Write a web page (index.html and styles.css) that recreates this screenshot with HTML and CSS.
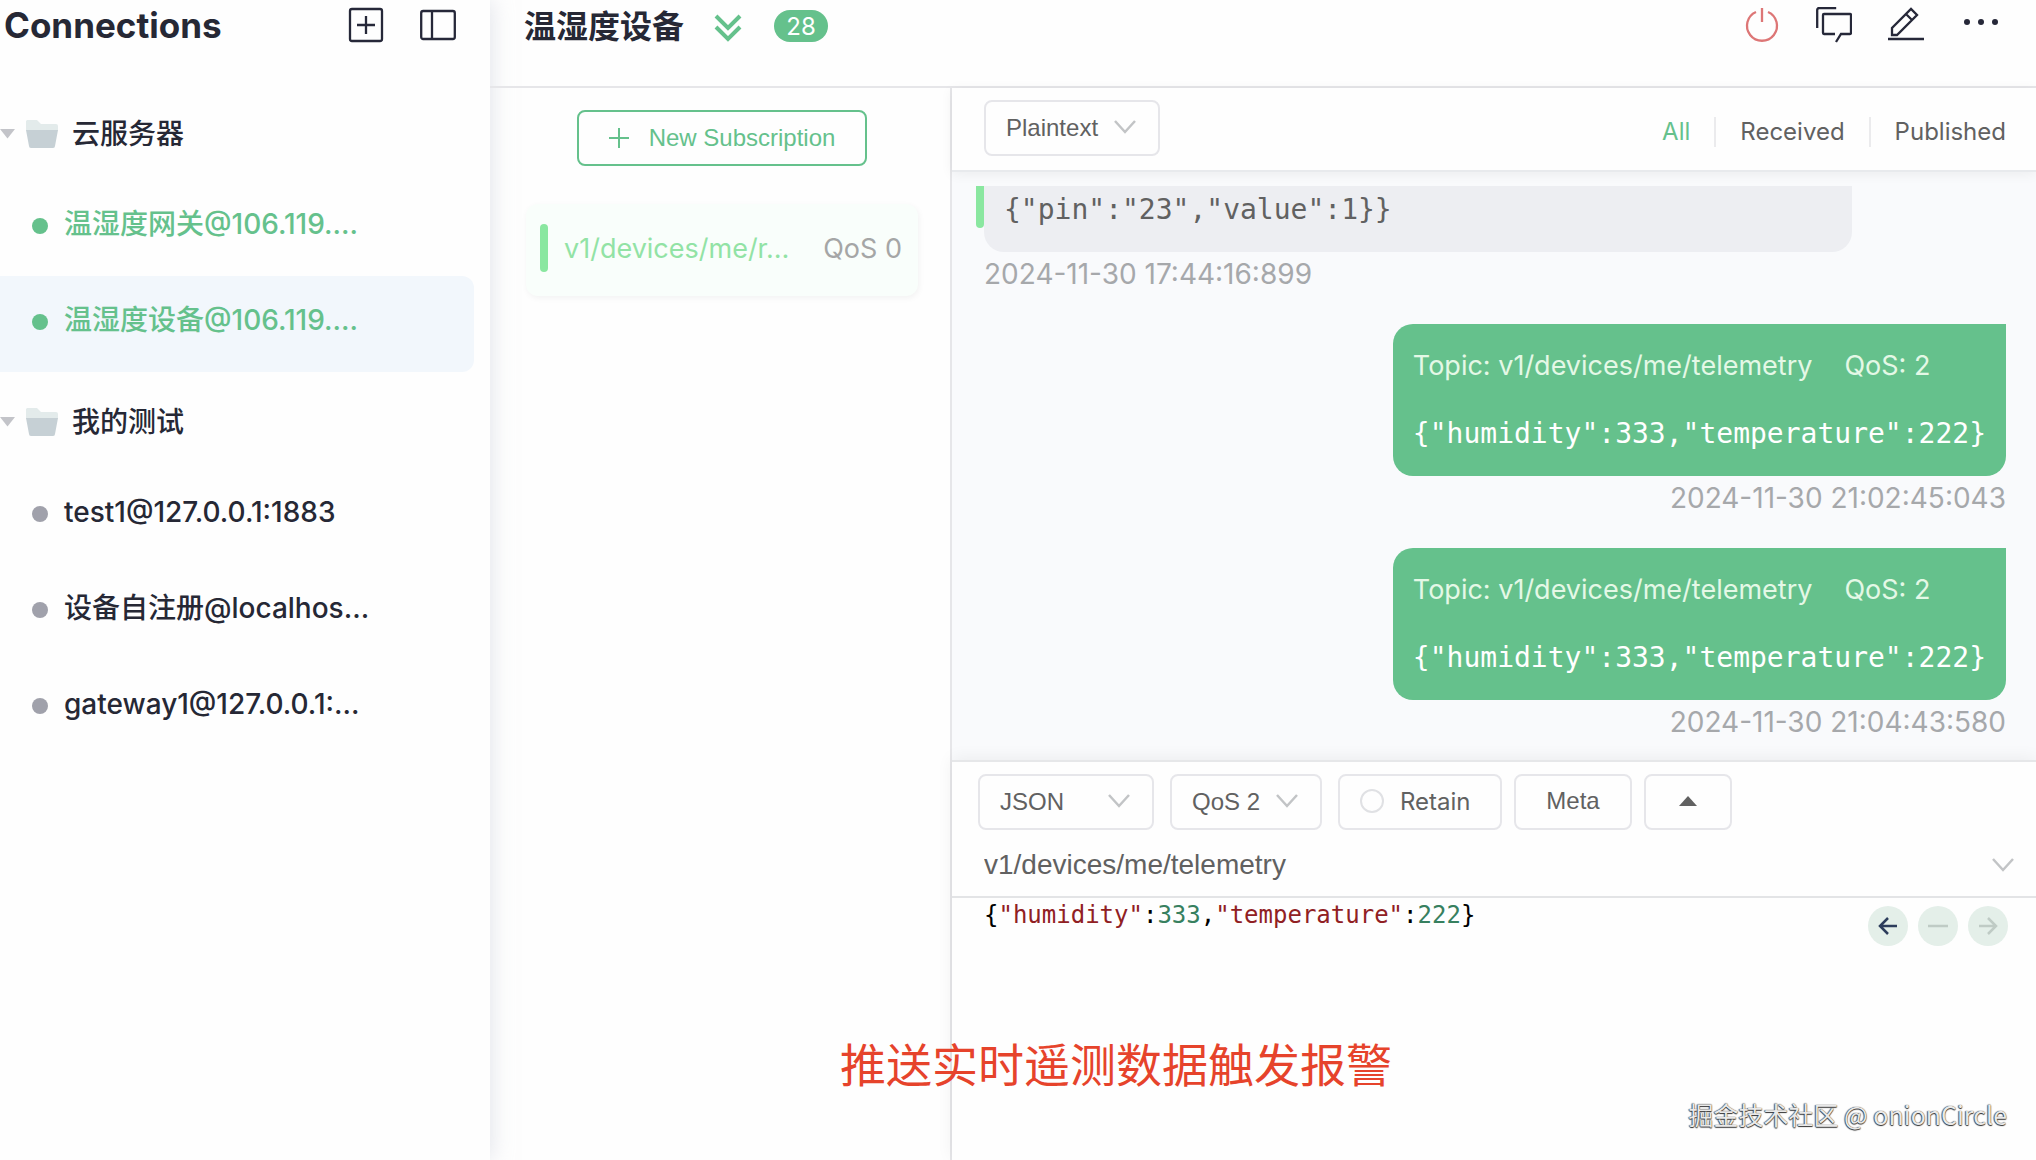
FILE: index.html
```html
<!DOCTYPE html>
<html lang="zh-CN">
<head>
<meta charset="utf-8">
<title>Connections</title>
<link rel="stylesheet" href="styles.css">
</head>
<body>
<div class="app">
  <aside class="sidebar">
    <header class="sidebar-head">
      <h1 class="sidebar-title">Connections</h1>
      <div class="sidebar-tools">
        <button class="icon-btn" type="button" aria-label="New connection">
          <svg width="36" height="36" viewBox="0 0 36 36" fill="none" stroke="currentColor" stroke-width="2.3"><rect x="2" y="2" width="32" height="32" rx="2"/><path d="M18 9v18M9 18h18"/></svg>
        </button>
        <button class="icon-btn" type="button" aria-label="Toggle panel">
          <svg width="36" height="36" viewBox="0 0 36 36" fill="none" stroke="currentColor" stroke-width="2.3"><rect x="1.200" y="4" width="33.600" height="28" rx="2"/><path d="M12 4v28"/></svg>
        </button>
      </div>
    </header>
    <nav class="tree">
      <div class="group">
        <svg class="caret" width="16" height="10" viewBox="0 0 16 10"><path d="M0 0h15L7.500 9.500z" fill="#c3c4c9"/></svg>
        <svg class="folder" width="32" height="28" viewBox="0 0 32 28"><path d="M1 0h10l4 4h15a2 2 0 0 1 2 2v5H0V1z" fill="#e3ebeb"/><path d="M0 10h32l-3 16a2 2 0 0 1-2 2H5a2 2 0 0 1-2-2z" fill="#c6d0d5"/></svg>
        <span>云服务器</span>
      </div>
      <a class="item online" href="#"><i class="dot"></i>温湿度网关@106.119.…</a>
      <a class="item online active" href="#"><i class="dot"></i>温湿度设备@106.119.…</a>
      <div class="group">
        <svg class="caret" width="16" height="10" viewBox="0 0 16 10"><path d="M0 0h15L7.500 9.500z" fill="#c3c4c9"/></svg>
        <svg class="folder" width="32" height="28" viewBox="0 0 32 28"><path d="M1 0h10l4 4h15a2 2 0 0 1 2 2v5H0V1z" fill="#e3ebeb"/><path d="M0 10h32l-3 16a2 2 0 0 1-2 2H5a2 2 0 0 1-2-2z" fill="#c6d0d5"/></svg>
        <span>我的测试</span>
      </div>
      <a class="item" href="#"><i class="dot"></i>test1@127.0.0.1:1883</a>
      <a class="item" href="#"><i class="dot"></i>设备自注册@localhos…</a>
      <a class="item" href="#"><i class="dot"></i>gateway1@127.0.0.1:…</a>
    </nav>
  </aside>

  <main class="main">
    <header class="main-head">
      <h2 class="conn-title">温湿度设备</h2>
      <button class="icon-btn expand" type="button" aria-label="Show details">
        <svg width="28" height="28" viewBox="0 0 28 28" fill="none" stroke="currentColor" stroke-width="4"><path d="M2 2l12 12L26 2M2 13l12 12 12-12"/></svg>
      </button>
      <span class="badge">28</span>
      <div class="head-tools">
        <button class="icon-btn power" type="button" aria-label="Disconnect">
          <svg width="36" height="36" viewBox="0 0 36 36" fill="none" stroke="currentColor" stroke-width="2.300"><path d="M12 5a15 15 0 1 0 12 0M18 1v14"/></svg>
        </button>
        <button class="icon-btn" type="button" aria-label="Chat">
          <svg width="36" height="36" viewBox="0 0 36 36" fill="none" stroke="currentColor" stroke-width="2.300"><path d="M1.200 21V3a2 2 0 0 1 2-2h17M19 27H8a1 1 0 0 1-1-1V8a1 1 0 0 1 1-1h26a1 1 0 0 1 1 1v18a1 1 0 0 1-1 1h-9l-5 8"/></svg>
        </button>
        <button class="icon-btn" type="button" aria-label="Edit">
          <svg width="36" height="36" viewBox="0 0 36 36" fill="none" stroke="currentColor" stroke-width="2.300"><path d="M0 32h36M4 28v-7L23 2l6 6-20 20zM18 7l6 6" /></svg>
        </button>
        <button class="icon-btn" type="button" aria-label="More">
          <svg width="42" height="36" viewBox="0 0 42 36" fill="currentColor"><circle cx="7" cy="15" r="3"/><circle cx="21" cy="15" r="3"/><circle cx="35" cy="15" r="3"/></svg>
        </button>
      </div>
    </header>

    <div class="workspace">
      <section class="subs">
        <button class="new-sub" type="button">
          <svg width="20" height="20" viewBox="0 0 20 20" fill="none" stroke="currentColor" stroke-width="2"><path d="M10 0v20M0 10h20"/></svg>
          New Subscription
        </button>
        <div class="sub-card">
          <i class="sub-mark"></i>
          <span class="sub-topic">v1/devices/me/r…</span>
          <span class="sub-qos">QoS 0</span>
        </div>
      </section>

      <section class="chat">
        <div class="chat-bar">
          <span class="select w-format">
            <select aria-label="Received format"><option>Plaintext</option></select>
            <svg class="chev" width="22" height="14" viewBox="0 0 22 14"><path d="M1 1l10 11L21 1"/></svg>
          </span>
          <nav class="filters">
            <a class="on" href="#">All</a>
            <a href="#">Received</a>
            <a href="#">Published</a>
          </nav>
        </div>

        <div class="messages">
          <div class="msg received">
            <div class="bubble"><code>{"pin":"23","value":1}}</code></div>
            <time>2024-11-30 17:44:16:899</time>
          </div>
          <div class="msg sent">
            <div class="bubble">
              <p class="meta"><span>Topic: v1/devices/me/telemetry</span><span>QoS: 2</span></p>
              <code>{"humidity":333,"temperature":222}</code>
            </div>
            <time>2024-11-30 21:02:45:043</time>
          </div>
          <div class="msg sent">
            <div class="bubble">
              <p class="meta"><span>Topic: v1/devices/me/telemetry</span><span>QoS: 2</span></p>
              <code>{"humidity":333,"temperature":222}</code>
            </div>
            <time>2024-11-30 21:04:43:580</time>
          </div>
        </div>

        <div class="publish">
          <div class="options">
            <span class="select w-format">
              <select aria-label="Payload format"><option>JSON</option></select>
              <svg class="chev" width="22" height="14" viewBox="0 0 22 14"><path d="M1 1l10 11L21 1"/></svg>
            </span>
            <span class="select w-qos">
              <select aria-label="QoS"><option>QoS 2</option></select>
              <svg class="chev" width="22" height="14" viewBox="0 0 22 14"><path d="M1 1l10 11L21 1"/></svg>
            </span>
            <div class="options-end">
              <label class="box retain"><input type="radio" name="retain">Retain</label>
              <button class="box meta-btn" type="button">Meta</button>
              <button class="box collapse" type="button" aria-label="Collapse"><svg width="18" height="10" viewBox="0 0 18 10"><path d="M9 0l9 10H0z" fill="currentColor"/></svg></button>
            </div>
          </div>
          <div class="topic-row">
            <input class="topic" type="text" aria-label="Topic" value="v1/devices/me/telemetry">
            <svg class="chev" width="22" height="14" viewBox="0 0 22 14"><path d="M1 1l10 11L21 1"/></svg>
          </div>
          <div class="editor">
            <pre class="payload"><code>{<b class="key">"humidity"</b>:<b class="num">333</b>,<b class="key">"temperature"</b>:<b class="num">222</b>}</code></pre>
            <div class="history">
              <button type="button" aria-label="Previous"><svg width="20" height="18" viewBox="0 0 20 18"><path d="M10 1L2 9l8 8M2 9h17"/></svg></button>
              <button type="button" aria-label="Reset" disabled><svg width="20" height="18" viewBox="0 0 20 18"><path d="M0 9h20"/></svg></button>
              <button type="button" aria-label="Next" disabled><svg width="20" height="18" viewBox="0 0 20 18"><path d="M10 1l8 8-8 8M18 9H1"/></svg></button>
            </div>
          </div>
        </div>
      </section>
    </div>
  </main>
  <p class="caption">推送实时遥测数据触发报警</p>
  <p class="watermark">掘金技术社区 @ onionCircle</p>
</div>
</body>
</html>
```
FILE: styles.css
```css
* { box-sizing: border-box; }

body {
  margin: 0;
  font-family: Inter, "Noto Sans CJK SC", sans-serif;
  font-size: 28px;
  color: #616161;
  background: #fefefe;
}

h1, h2, p, pre { margin: 0; }
a { color: inherit; text-decoration: none; }
code, pre { font-family: "DejaVu Sans Mono", monospace; }
svg { display: block; flex: none; }

button, input, select {
  font-family: "Liberation Sans", sans-serif;
  font-size: 24px;
  color: #616161;
  background: none;
  border: 0;
  margin: 0;
  padding: 0;
}

.app {
  position: relative;
  display: flex;
  height: 100vh;
  overflow: hidden;
}

/* Connection list */
.sidebar {
  flex: none;
  width: 490px;
  color: #262835;
  box-shadow: 2px 0 20px #c9cdd980;
}

.sidebar-head {
  display: flex;
  justify-content: space-between;
  height: 84px;
  padding: 0 34px 0 4px;
}

.sidebar-title {
  font-size: 35px;
  line-height: 50px;
  font-weight: 700;
}

.sidebar-tools {
  display: flex;
  align-items: flex-start;
  gap: 36px;
  padding-top: 7px;
}

.icon-btn { color: #262839; display: block; }

.group, .item {
  display: flex;
  align-items: center;
  height: 96px;
  line-height: 36px;
  font-weight: 500;
  white-space: nowrap;
}

.group { padding-top: 4px; }
.caret { margin-right: 10px; }
.folder { margin-right: 14px; }

.item {
  margin-right: 16px;
  padding: 0 0 8px 32px;
  border-radius: 0 12px 12px 0;
}

.item.online { color: #65c18c; }
.item.active { background: #f2f7fc; }

.dot {
  width: 16px;
  height: 16px;
  margin-top: 4px;
  margin-right: 16px;
  border-radius: 50%;
  background: #a0a1ab;
}

.online .dot { background: #65c18c; }

/* Right side */
.main {
  flex: 1;
  min-width: 0;
  display: flex;
  flex-direction: column;
}

.main-head {
  display: flex;
  align-items: flex-start;
  height: 88px;
  padding: 0 34px;
  border-bottom: 2px solid #e6e6e9;
}

.conn-title {
  font-size: 32px;
  line-height: 54px;
  font-weight: 700;
  color: #262835;
}

.expand { margin: 14px 32px 0 30px; color: #65c18c; }

.badge {
  min-width: 54px;
  height: 32px;
  margin-top: 10px;
  border-radius: 16px;
  background: #65c18c;
  color: #fff;
  font-size: 24px;
  line-height: 34px;
  text-align: center;
}

.head-tools {
  display: flex;
  gap: 36px;
  margin-left: auto;
  padding-top: 7px;
}

.power { color: #dd7676; }

.workspace { flex: 1; min-height: 0; display: flex; }

/* Subscriptions */
.subs {
  flex: none;
  width: 462px;
  padding: 22px 32px 0 36px;
  border-right: 2px solid #e6e6e9;
}

.new-sub {
  display: flex;
  align-items: center;
  justify-content: center;
  gap: 20px;
  width: 290px;
  height: 56px;
  margin: 0 auto;
  border: 2px solid #65c18c;
  border-radius: 8px;
  color: #65c18c;
}

.sub-card {
  display: flex;
  align-items: center;
  height: 92px;
  margin-top: 38px;
  padding: 0 16px 4px 14px;
  border-radius: 12px;
  background: #f9fefb;
  box-shadow: 1px 2px 6px #0000000d;
}

.sub-mark {
  width: 8px;
  height: 48px;
  margin-right: 16px;
  border-radius: 4px;
  background: #8ae7a0;
}

.sub-topic { font-size: 27px; color: #92e3a5; }
.sub-qos { margin-left: auto; font-size: 27px; color: #a5a6a6; }

/* Message stream */
.chat {
  flex: 1;
  min-width: 0;
  display: flex;
  flex-direction: column;
}

.chat-bar {
  position: relative;
  display: flex;
  justify-content: space-between;
  height: 84px;
  padding: 12px 30px 0 32px;
  border-bottom: 2px solid #e8eaed;
  box-shadow: 0 2px 12px #0000000f;
}

.select { position: relative; height: 56px; }
.w-format { width: 176px; }
.w-qos { width: 152px; }

.select select {
  appearance: none;
  width: 100%;
  height: 56px;
  padding: 0 40px 2px 20px;
  border: 2px solid #e6e6ea;
  border-radius: 8px;
}

.select .chev {
  position: absolute;
  top: 20px;
  right: 24px;
  pointer-events: none;
}

.chev path { fill: none; stroke: #c2c4c6; stroke-width: 2.500; }

.filters {
  display: flex;
  align-items: center;
  height: 38px;
  font-size: 24px;
}

.filters a { line-height: 30px; margin-top: 26px; }
.filters a + a { margin-left: 24px; padding-left: 24px; border-left: 2px solid #ebebed; }
.filters .on { color: #65c18c; }

.messages {
  flex: none;
  display: flex;
  flex-direction: column;
  gap: 32px;
  padding: 14px 30px 20px 24px;
  background: #f9fafc;
}

.msg { display: flex; flex-direction: column; align-items: flex-start; gap: 4px; }
.sent { align-items: flex-end; }
.msg time { line-height: 36px; color: #a6a8ab; }
.received time { margin-left: 8px; }
.bubble code { display: block; line-height: 36px; }

.received .bubble {
  position: relative;
  width: 868px;
  max-width: 100%;
  height: 66px;
  margin-left: 8px;
  padding: 6px 20px;
  border-radius: 0 0 20px 20px;
  background: #edeef2;
}

/* Topic colour strip on the left of the bubble */
.received .bubble::before {
  content: "";
  position: absolute;
  left: -8px;
  top: 0;
  width: 8px;
  height: 42px;
  border-radius: 0 0 4px 4px;
  background: #8ae7a0;
}

.sent .bubble {
  height: 152px;
  padding: 24px 20px;
  border-radius: 20px 0 20px 20px;
  background: #65c18c;
  color: #fff;
}

.meta {
  display: flex;
  gap: 32px;
  font-size: 27px;
  line-height: 36px;
  margin-bottom: 32px;
  color: #e4f8e6;
}

/* Publish panel */
.publish {
  position: relative;
  flex: 1;
  background: #fefefe;
  border-top: 2px solid #e6e7e9;
  box-shadow: 0 -2px 16px #0000000f;
}

.options { display: flex; gap: 16px; padding: 12px 26px 0; }
.options-end { display: flex; gap: 12px; }

.box {
  display: flex;
  align-items: center;
  justify-content: center;
  height: 56px;
  padding-bottom: 2px;
  border: 2px solid #e6e6ea;
  border-radius: 8px;
}

.retain {
  width: 164px;
  justify-content: flex-start;
  padding-left: 20px;
  gap: 16px;
  font-size: 24px;
}

.retain input {
  appearance: none;
  width: 24px;
  height: 24px;
  border: 2px solid #e0e1e4;
  border-radius: 50%;
}

.meta-btn { width: 118px; }
.collapse { width: 88px; }

.topic-row {
  display: flex;
  align-items: center;
  height: 68px;
  padding: 4px 22px 0 32px;
  border-bottom: 2px solid #e3e4e6;
}

.topic { flex: 1; font-size: 28px; height: 44px; }

.editor {
  display: flex;
  justify-content: space-between;
  align-items: flex-start;
  padding: 0 28px 0 32px;
}

.payload { font-size: 24px; line-height: 34px; color: #000; }
.payload b { font-weight: 400; }
.payload .key { color: #902023; }
.payload .num { color: #37805f; }

.history { display: flex; gap: 10px; padding-top: 8px; }

.history button {
  display: flex;
  align-items: center;
  justify-content: center;
  width: 40px;
  height: 40px;
  border-radius: 50%;
  background: #e4efe9;
  color: #2d3d5c;
}

.history button:disabled { color: #bfcbc5; }
.history path { fill: none; stroke: currentColor; stroke-width: 2.500; }

/* Overlays */
.caption {
  position: absolute;
  left: 840px;
  bottom: 61px;
  font-size: 46px;
  line-height: 68px;
  color: #e6432b;
}

.watermark {
  position: absolute;
  right: 29px;
  bottom: 27px;
  font-family: "Noto Sans CJK SC", sans-serif;
  font-size: 25px;
  line-height: 38px;
  color: #e9e9e9;
  text-shadow: 0 0 1px #333, 0 1px 1px #333, -1px 0 1px #777;
}
```
